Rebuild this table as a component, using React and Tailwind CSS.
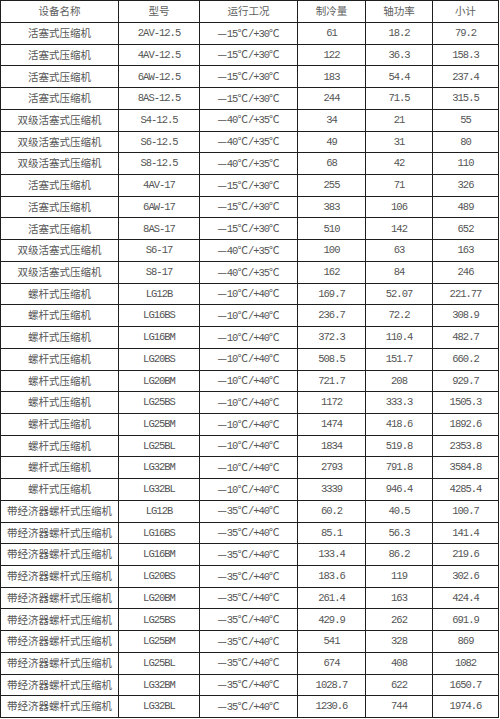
const rows = [
  ["活塞式压缩机", "2AV-12.5", "15", "30", "61", "18.2", "79.2"],
  ["活塞式压缩机", "4AV-12.5", "15", "30", "122", "36.3", "158.3"],
  ["活塞式压缩机", "6AW-12.5", "15", "30", "183", "54.4", "237.4"],
  ["活塞式压缩机", "8AS-12.5", "15", "30", "244", "71.5", "315.5"],
  ["双级活塞式压缩机", "S4-12.5", "40", "35", "34", "21", "55"],
  ["双级活塞式压缩机", "S6-12.5", "40", "35", "49", "31", "80"],
  ["双级活塞式压缩机", "S8-12.5", "40", "35", "68", "42", "110"],
  ["活塞式压缩机", "4AV-17", "15", "30", "255", "71", "326"],
  ["活塞式压缩机", "6AW-17", "15", "30", "383", "106", "489"],
  ["活塞式压缩机", "8AS-17", "15", "30", "510", "142", "652"],
  ["双级活塞式压缩机", "S6-17", "40", "35", "100", "63", "163"],
  ["双级活塞式压缩机", "S8-17", "40", "35", "162", "84", "246"],
  ["螺杆式压缩机", "LG12B", "10", "40", "169.7", "52.07", "221.77"],
  ["螺杆式压缩机", "LG16BS", "10", "40", "236.7", "72.2", "308.9"],
  ["螺杆式压缩机", "LG16BM", "10", "40", "372.3", "110.4", "482.7"],
  ["螺杆式压缩机", "LG20BS", "10", "40", "508.5", "151.7", "660.2"],
  ["螺杆式压缩机", "LG20BM", "10", "40", "721.7", "208", "929.7"],
  ["螺杆式压缩机", "LG25BS", "10", "40", "1172", "333.3", "1505.3"],
  ["螺杆式压缩机", "LG25BM", "10", "40", "1474", "418.6", "1892.6"],
  ["螺杆式压缩机", "LG25BL", "10", "40", "1834", "519.8", "2353.8"],
  ["螺杆式压缩机", "LG32BM", "10", "40", "2793", "791.8", "3584.8"],
  ["螺杆式压缩机", "LG32BL", "10", "40", "3339", "946.4", "4285.4"],
  ["带经济器螺杆式压缩机", "LG12B", "35", "40", "60.2", "40.5", "100.7"],
  ["带经济器螺杆式压缩机", "LG16BS", "35", "40", "85.1", "56.3", "141.4"],
  ["带经济器螺杆式压缩机", "LG16BM", "35", "40", "133.4", "86.2", "219.6"],
  ["带经济器螺杆式压缩机", "LG20BS", "35", "40", "183.6", "119", "302.6"],
  ["带经济器螺杆式压缩机", "LG20BM", "35", "40", "261.4", "163", "424.4"],
  ["带经济器螺杆式压缩机", "LG25BS", "35", "40", "429.9", "262", "691.9"],
  ["带经济器螺杆式压缩机", "LG25BM", "35", "40", "541", "328", "869"],
  ["带经济器螺杆式压缩机", "LG25BL", "35", "40", "674", "408", "1082"],
  ["带经济器螺杆式压缩机", "LG32BM", "35", "40", "1028.7", "622", "1650.7"],
  ["带经济器螺杆式压缩机", "LG32BL", "35", "40", "1230.6", "744", "1974.6"],
];

const headers = ["设备名称", "型号", "运行工况", "制冷量", "轴功率", "小计"];

// 宋体风格: 中文用 CJK 字体, 半角字符用等宽字体
const cjk = "font-['Noto_Sans_CJK_SC',sans-serif]";
const mono = "font-['Liberation_Mono','Noto_Sans_CJK_SC',monospace] tracking-[-1px]";
const cell = "border border-[#1e1e1e] text-center align-middle p-0 leading-none";

const Temp = ({ low, high }) => (
  <span className="whitespace-nowrap">
    <span className={cjk}>—</span>
    <span className={mono}>{low}</span>
    <span className={cjk}>℃</span>
    <span className={mono}>/+{high}</span>
    <span className={cjk}>℃</span>
  </span>
);

export default function App() {
  return (
    <div className="w-[500px] h-[719px] bg-white overflow-hidden">
      <table className="border-collapse table-fixed w-[498px] text-[10.5px] text-[#555555]">
        <colgroup>
          <col className="w-[118px]" />
          <col className="w-[81px]" />
          <col className="w-[98px]" />
          <col className="w-[68px]" />
          <col className="w-[67px]" />
          <col className="w-[66px]" />
        </colgroup>
        <thead>
          <tr className="h-[22px]">
            {headers.map((h) => (
              <th key={h} className={`${cell} ${cjk} font-normal text-[#606060]`}>
                {h}
              </th>
            ))}
          </tr>
        </thead>
        <tbody>
          {rows.map((r, i) => (
            <tr key={i} className="h-[21.72px]">
              <td className={`${cell} ${cjk}`}>{r[0]}</td>
              <td className={`${cell} ${mono}`}>{r[1]}</td>
              <td className={cell}>
                <Temp low={r[2]} high={r[3]} />
              </td>
              <td className={`${cell} ${mono}`}>{r[4]}</td>
              <td className={`${cell} ${mono}`}>{r[5]}</td>
              <td className={`${cell} ${mono}`}>{r[6]}</td>
            </tr>
          ))}
        </tbody>
      </table>
    </div>
  );
}
